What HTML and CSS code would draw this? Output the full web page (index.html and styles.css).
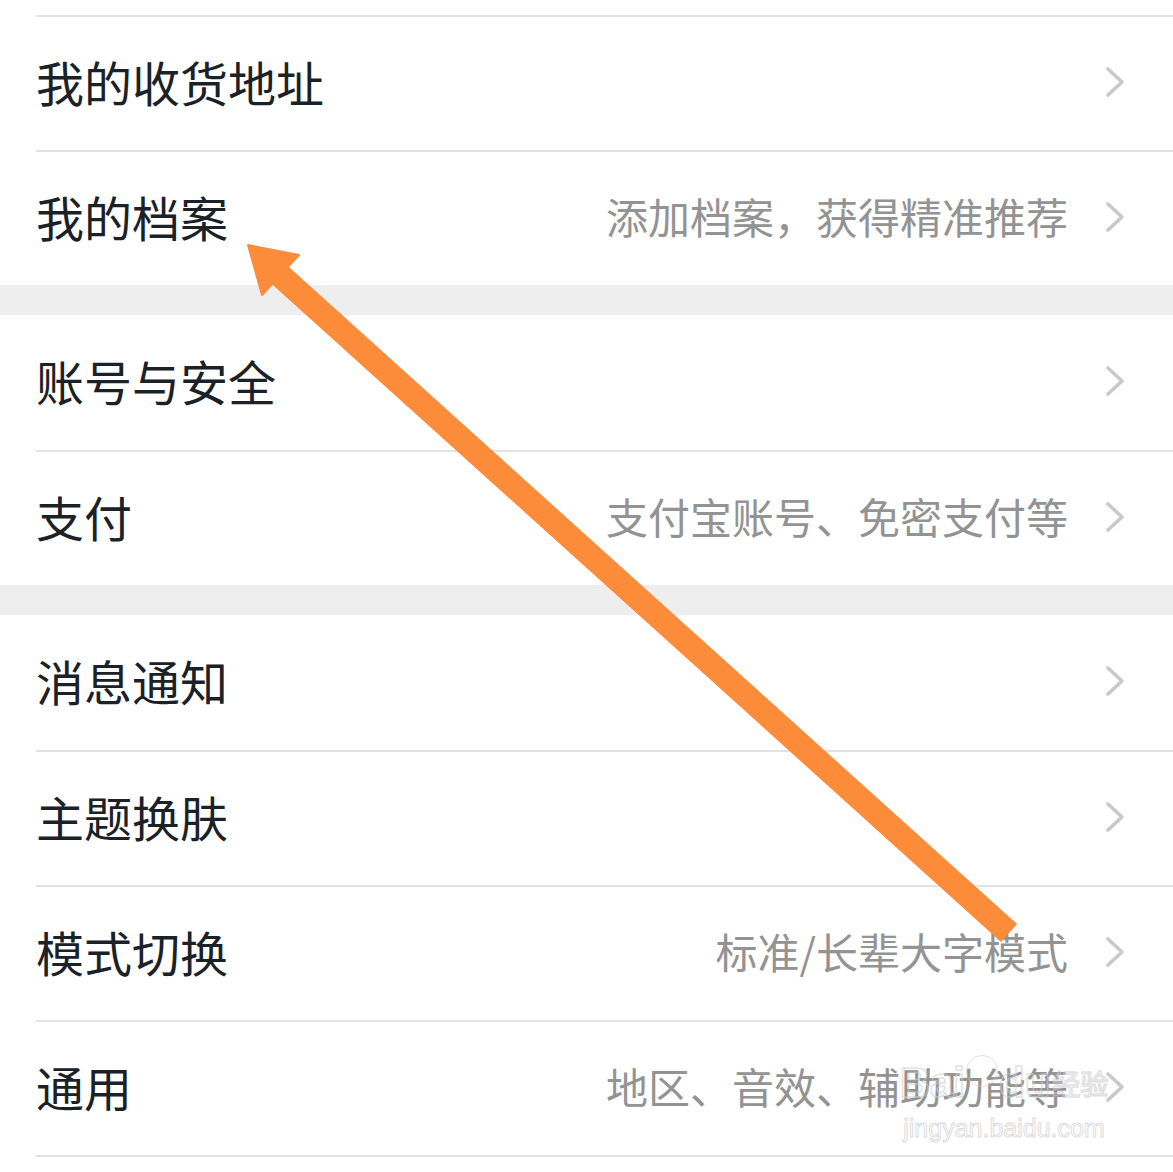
FILE: index.html
```html
<!DOCTYPE html>
<html lang="zh-CN">
<head>
<meta charset="utf-8">
<title>设置</title>
<link rel="stylesheet" href="styles.css">
</head>
<body>
<div class="page">
  <div class="top-space"></div>
  <div class="group group-first">
    <div class="row"><span class="label">我的收货地址</span><span class="value"></span><svg class="chev" viewBox="0 0 22 32"><path d="M4 3 L18 16 L4 29"/></svg></div>
    <div class="row"><span class="label">我的档案</span><span class="value">添加档案，获得精准推荐</span><svg class="chev" viewBox="0 0 22 32"><path d="M4 3 L18 16 L4 29"/></svg></div>
  </div>
  <div class="band"></div>
  <div class="group">
    <div class="row"><span class="label">账号与安全</span><span class="value"></span><svg class="chev" viewBox="0 0 22 32"><path d="M4 3 L18 16 L4 29"/></svg></div>
    <div class="row"><span class="label">支付</span><span class="value">支付宝账号、免密支付等</span><svg class="chev" viewBox="0 0 22 32"><path d="M4 3 L18 16 L4 29"/></svg></div>
  </div>
  <div class="band"></div>
  <div class="group group-last">
    <div class="row"><span class="label">消息通知</span><span class="value"></span><svg class="chev" viewBox="0 0 22 32"><path d="M4 3 L18 16 L4 29"/></svg></div>
    <div class="row"><span class="label">主题换肤</span><span class="value"></span><svg class="chev" viewBox="0 0 22 32"><path d="M4 3 L18 16 L4 29"/></svg></div>
    <div class="row"><span class="label">模式切换</span><span class="value">标准/长辈大字模式</span><svg class="chev" viewBox="0 0 22 32"><path d="M4 3 L18 16 L4 29"/></svg></div>
    <div class="row"><span class="label">通用</span><span class="value">地区、音效、辅助功能等</span><svg class="chev" viewBox="0 0 22 32"><path d="M4 3 L18 16 L4 29"/></svg></div>
  </div>

  <svg class="arrow" viewBox="0 0 1173 1172" width="1173" height="1172">
    <line x1="1009" y1="933" x2="272" y2="268" stroke="#fd8c3a" stroke-width="24" stroke-linecap="butt"/>
    <polygon points="248,245 262,295 299,255" fill="#fd8c3a" stroke="#fd8c3a" stroke-width="2" stroke-linejoin="round"/>
  </svg>

  <div class="watermark">
    <div class="wm-logo">Bai<span class="wm-paw"></span>du<span class="wm-cn">经验</span></div>
    <div class="wm-url">jingyan.baidu.com</div>
  </div>
</div>
</body>
</html>
```

FILE: styles.css
```css
html, body {
  margin: 0;
  padding: 0;
  background: #ffffff;
}

.page {
  position: relative;
  width: 1173px;
  height: 1172px;
  overflow: hidden;
  font-family: "Noto Sans CJK SC", "Noto Sans", sans-serif;
}

.top-space {
  height: 15px;
}

.group {
  display: flex;
  flex-direction: column;
}

.row {
  box-sizing: border-box;
  height: 135px;
  margin-left: 36px;
  padding-right: 47px;
  padding-bottom: 5px;
  display: flex;
  align-items: center;
}

.row + .row,
.group-first .row:first-child {
  border-top: 2px solid #e2e2e2;
}

.group-last .row:last-child {
  border-bottom: 2px solid #e2e2e2;
  height: 137px;
}

.label {
  font-size: 48px;
  color: #1a2127;
  line-height: 1;
  white-space: nowrap;
}

.value {
  flex: 1;
  text-align: right;
  font-size: 42px;
  color: #939393;
  line-height: 1;
  white-space: nowrap;
  margin-right: 36px;
}

.chev {
  width: 22px;
  height: 32px;
  flex: none;
  margin-top: 2px;
}

.chev path {
  fill: none;
  stroke: #c9c9c9;
  stroke-width: 3.6;
  stroke-linecap: round;
  stroke-linejoin: round;
}

.band {
  height: 30px;
  background: #eeeeee;
}

.arrow {
  position: absolute;
  left: 0;
  top: 0;
  pointer-events: none;
}

.watermark {
  position: absolute;
  left: 896px;
  top: 1062px;
  width: 216px;
  display: flex;
  flex-direction: column;
  align-items: center;
  pointer-events: none;
  color: transparent;
  font-family: "Liberation Sans", Arial, sans-serif;
}

.wm-logo {
  font-size: 42px;
  font-weight: bold;
  line-height: 1;
  -webkit-text-stroke: 1.5px rgba(205, 205, 205, 0.6);
  display: flex;
  align-items: center;
}

.wm-paw {
  display: inline-block;
  width: 30px;
  height: 30px;
  border-radius: 50%;
  border: 1.5px solid rgba(205, 205, 205, 0.6);
  margin: -24px 1px 0;
}

.wm-cn {
  font-family: "Noto Sans CJK SC", sans-serif;
  font-size: 28px;
  font-weight: normal;
  margin-left: 2px;
}

.wm-url {
  margin-top: 12px;
  font-size: 25px;
  line-height: 1;
  -webkit-text-stroke: 1px rgba(205, 205, 205, 0.7);
}
```
